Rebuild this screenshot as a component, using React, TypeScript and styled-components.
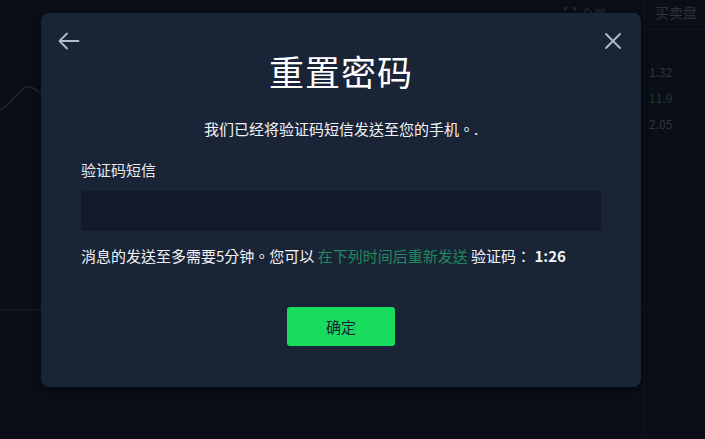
import React, { useState } from 'react';
import styled, { createGlobalStyle } from 'styled-components';

const GlobalStyle = createGlobalStyle`
  html, body {
    margin: 0;
    padding: 0;
    background: #0a0e17;
    font-family: "Noto Sans CJK TC", "Noto Sans CJK SC", "Noto Sans", sans-serif;
  }
  * { box-sizing: border-box; }
`;

const Page = styled.div`
  position: relative;
  width: 705px;
  height: 439px;
  overflow: hidden;
  background: #0a0e17;
  display: grid;
  grid-template-columns: 1fr 61px;
`;

const ChartArea = styled.div`
  display: flex;
  flex-direction: column;
`;

const TopBar = styled.div`
  height: 30px;
  display: flex;
  justify-content: flex-end;
  align-items: center;
  gap: 6px;
  padding: 0 38px 4px 0;
  color: #2a303b;
  font-size: 12px;
`;

const ChartBody = styled.div`
  flex: 1;
  display: flex;
  flex-direction: column;
`;

const GridLine = styled.div`
  margin-top: 187px;
  height: 1px;
  background: #151b27;
`;

const SidePanel = styled.div`
  border-left: 1px solid #0e131c;
  display: flex;
  flex-direction: column;
`;

const SideHead = styled.div`
  height: 30px;
  padding: 2px 0 0 10px;
  color: #2c313b;
  font-size: 14px;
  white-space: nowrap;
  overflow: hidden;
  border-bottom: 1px solid #111621;
`;

const SideList = styled.div`
  display: flex;
  flex-direction: column;
  gap: 8px;
  padding: 33px 0 0 4px;
`;

const Price = styled.div<{ $up?: boolean }>`
  font-size: 12px;
  line-height: 18px;
  color: ${({ $up }) => ($up ? '#1b3a33' : '#2f3642')};
`;

const Overlay = styled.div`
  position: absolute;
  inset: 0;
  padding: 13px 0 0 41px;
`;

const Modal = styled.div`
  width: 600px;
  height: 374px;
  background: #1a2437;
  border-radius: 8px;
  box-shadow: 0 2px 10px rgba(0, 0, 0, 0.45);
  padding: 16px 40px 0;
  display: flex;
  flex-direction: column;
  color: #fff;
`;

const Header = styled.div`
  display: grid;
  grid-template-columns: 40px 1fr 40px;
  align-items: start;
  margin: 0 -24px;
`;

const IconButton = styled.button<{ $right?: boolean }>`
  background: none;
  border: 0;
  padding: 0;
  width: 24px;
  height: 24px;
  cursor: pointer;
  justify-self: ${({ $right }) => ($right ? 'end' : 'start')};
  display: flex;
  align-items: center;
  justify-content: center;
`;

const Title = styled.h2`
  margin: 18px 0 0;
  text-align: center;
  font-size: 35px;
  line-height: 48px;
  font-weight: 400;
  letter-spacing: 1px;
`;

const Subtitle = styled.p`
  margin: 23px 0 0;
  text-align: center;
  font-size: 15px;
  line-height: 22px;
  color: #f2f4f7;
`;

const Label = styled.label`
  margin-top: 19px;
  font-size: 15px;
  line-height: 22px;
  color: #e6e9ee;
`;

const Input = styled.input`
  margin-top: 10px;
  height: 40px;
  width: 100%;
  background: #131a2a;
  border: 0;
  border-radius: 2px;
  outline: none;
  color: #fff;
  padding: 0 12px;
  font-size: 15px;
  font-family: inherit;
`;

const Info = styled.p`
  margin: 14px 0 0;
  font-size: 15px;
  line-height: 22px;
  color: #f2f4f7;
  white-space: nowrap;
`;

const Resend = styled.span`
  color: #1f8a5b;
`;

const Timer = styled.span`
  font-weight: 700;
`;

const Footer = styled.div`
  display: flex;
  justify-content: center;
  margin-top: 40px;
`;

const ConfirmButton = styled.button`
  width: 108px;
  height: 39px;
  border: 0;
  border-radius: 3px;
  background: #17dc5e;
  color: #1a2437;
  font-size: 15px;
  font-family: inherit;
  cursor: pointer;
`;

const App: React.FC = () => {
  const [code, setCode] = useState('');

  return (
    <>
      <GlobalStyle />
      <Page>
        <ChartArea>
          <TopBar>
            <svg width="12" height="12" viewBox="0 0 12 12" fill="none" stroke="#2a303b" strokeWidth="1.2">
              <path d="M1 4V1h3M8 1h3v3M11 8v3H8M4 11H1V8" />
            </svg>
            <span>全屏</span>
          </TopBar>
          <ChartBody>
            <svg width="60" height="40" viewBox="0 0 60 40" style={{ marginTop: 52 }}>
              <path d="M0 28 C8 26 14 14 24 6 C30 2 36 8 44 14" fill="none" stroke="#262d3a" strokeWidth="1.2" />
            </svg>
            <GridLine />
          </ChartBody>
        </ChartArea>
        <SidePanel>
          <SideHead>买卖盘</SideHead>
          <SideList>
            <Price>1.32</Price>
            <Price $up>11.9</Price>
            <Price>2.05</Price>
          </SideList>
        </SidePanel>

        <Overlay>
          <Modal>
            <Header>
              <IconButton aria-label="返回">
                <svg width="22" height="18" viewBox="0 0 22 18" fill="none" stroke="#b3bccb" strokeWidth="1.8" strokeLinecap="round" strokeLinejoin="round">
                  <path d="M20.5 9H2M9 1.5L1.5 9 9 16.5" />
                </svg>
              </IconButton>
              <Title>重置密码</Title>
              <IconButton $right aria-label="关闭">
                <svg width="18" height="18" viewBox="0 0 18 18" fill="none" stroke="#b3bccb" strokeWidth="1.8" strokeLinecap="round">
                  <path d="M2 2l14 14M16 2L2 16" />
                </svg>
              </IconButton>
            </Header>
            <Subtitle>我们已经将验证码短信发送至您的手机。.</Subtitle>
            <Label htmlFor="sms">验证码短信</Label>
            <Input id="sms" value={code} onChange={(e) => setCode(e.target.value)} />
            <Info>
              消息的发送至多需要5分钟。您可以 <Resend>在下列时间后重新发送</Resend> 验证码： <Timer>1:26</Timer>
            </Info>
            <Footer>
              <ConfirmButton>确定</ConfirmButton>
            </Footer>
          </Modal>
        </Overlay>
      </Page>
    </>
  );
};

export default App;
